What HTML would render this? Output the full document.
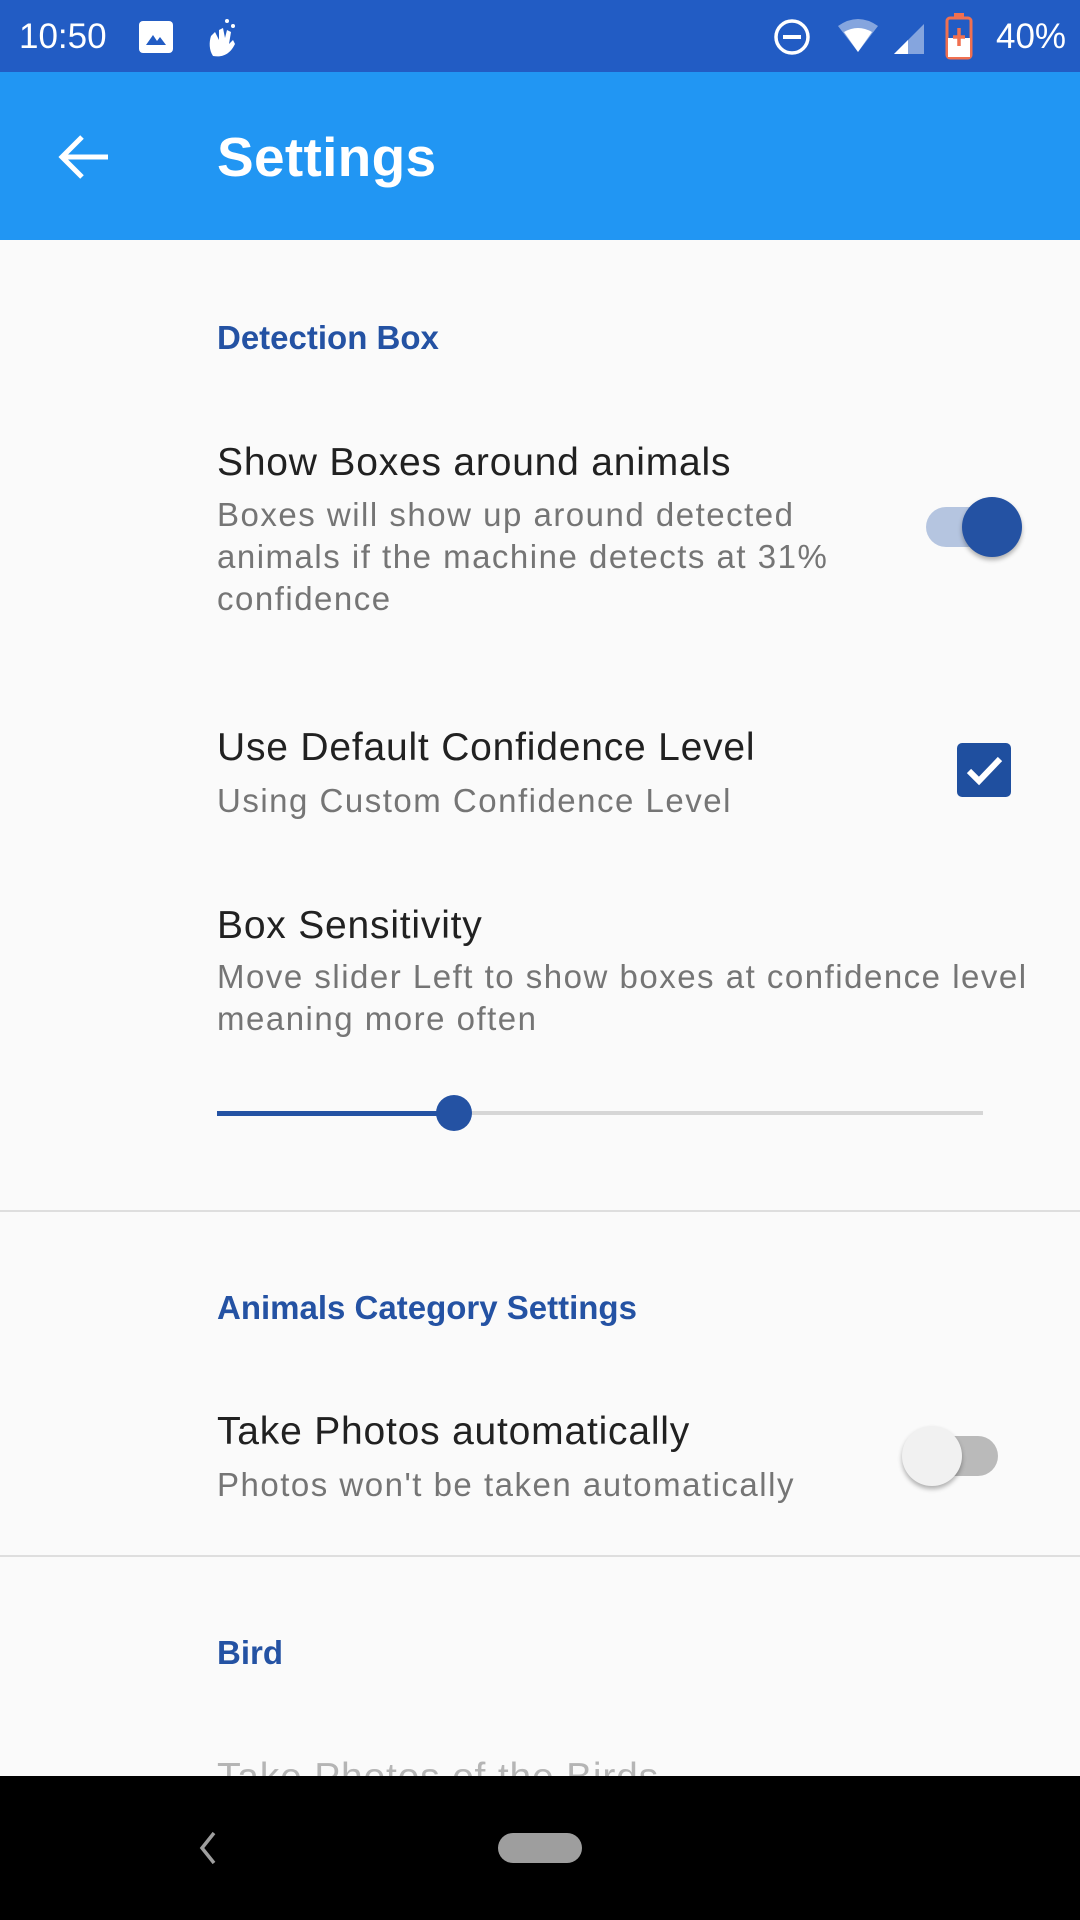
<!DOCTYPE html>
<html><head><meta charset="utf-8"><style>
*{margin:0;padding:0;box-sizing:border-box}
body{width:1080px;height:1920px;background:#fafafa;font-family:"Liberation Sans",sans-serif;position:relative;overflow:hidden}
.a{position:absolute;white-space:nowrap}
.cat{color:#2452a3;font-size:33px;font-weight:bold;left:217px}
.t{color:#212121;font-size:39px;left:217px;letter-spacing:.8px}
.s{color:#757575;font-size:33px;left:217px;line-height:42px;letter-spacing:1.5px}
</style></head><body>
<div class="a" style="left:0;top:0;width:1080px;height:72px;background:#225cc4"></div>
<div class="a" style="left:19px;top:17px;color:#fff;font-size:35px">10:50</div>
<div class="a" style="left:139px;top:21px;width:34px;height:32px;background:#fff;border-radius:4px"></div>
<svg class="a" style="left:142px;top:25px" width="28" height="24"><path d="M4 20 L11 10 L15 16 L18 12 L24 20Z" fill="#225cc4"/></svg>
<svg class="a" style="left:205px;top:16px" width="34" height="42"><path d="M8 40 C4 34 4 26 6 20 L10 16 L14 24 L14 14 L18 12 L20 22 L22 14 L26 16 L24 28 L28 24 L30 28 C26 36 20 42 8 40Z" fill="#fff"/><circle cx="22" cy="5" r="2" fill="#fff"/><circle cx="28" cy="10" r="2" fill="#fff"/></svg>
<svg class="a" style="left:772px;top:17px" width="40" height="40"><circle cx="20" cy="20" r="16" fill="none" stroke="#fff" stroke-width="3.5"/><rect x="11" y="18" width="18" height="4" fill="#fff"/></svg>
<svg class="a" style="left:836px;top:18px" width="92" height="40"><path d="M2 8 Q22 -6 42 8 L22 34Z" fill="#fff" opacity=".45"/><path d="M8 14 Q22 6 36 14 L22 34Z" fill="#fff"/><path d="M88 6 L88 36 L58 36Z" fill="#fff" opacity=".45"/><path d="M72 22 L72 36 L58 36Z" fill="#fff"/></svg>
<svg class="a" style="left:944px;top:12px" width="30" height="48"><rect x="10" y="1" width="10" height="5" fill="#f07050"/><rect x="3" y="6" width="24" height="40" rx="3" fill="#225cc4" stroke="#f07050" stroke-width="3"/><rect x="4" y="26" width="22" height="19" fill="#fff"/><path d="M15 16 V34 M9 25 H21" stroke="#f07050" stroke-width="3.5"/></svg>
<div class="a" style="left:996px;top:17px;color:#fff;font-size:35px">40%</div>
<div class="a" style="left:0;top:72px;width:1080px;height:168px;background:#2196f3"></div>
<svg class="a" style="left:58px;top:133px" width="52" height="48"><path d="M50 24 H6 M24 4 L4 24 L24 44" fill="none" stroke="#fff" stroke-width="5"/></svg>
<div class="a" style="left:217px;top:125px;color:#fff;font-size:55px;font-weight:bold;letter-spacing:.3px">Settings</div>

<div class="a cat" style="top:319px">Detection Box</div>
<div class="a t" style="top:441px">Show Boxes around animals</div>
<div class="a s" style="top:494px">Boxes will show up around detected<br>animals if the machine detects at 31%<br>confidence</div>
<div class="a" style="left:926px;top:507px;width:76px;height:40px;border-radius:20px;background:#b5c5e0"></div>
<div class="a" style="left:962px;top:497px;width:60px;height:60px;border-radius:50%;background:#2452a3;box-shadow:0 3px 5px rgba(0,0,0,.3)"></div>

<div class="a t" style="top:726px">Use Default Confidence Level</div>
<div class="a s" style="top:780px">Using Custom Confidence Level</div>
<div class="a" style="left:957px;top:743px;width:54px;height:54px;border-radius:5px;background:#1f4f9f"></div>
<svg class="a" style="left:957px;top:743px" width="54" height="54"><path d="M12 28 L22 38 L43 16" fill="none" stroke="#fff" stroke-width="6"/></svg>

<div class="a t" style="top:904px">Box Sensitivity</div>
<div class="a s" style="top:956px">Move slider Left to show boxes at confidence level<br>meaning more often</div>
<div class="a" style="left:217px;top:1111px;width:766px;height:4px;background:#d6d6d6"></div>
<div class="a" style="left:217px;top:1111px;width:237px;height:5px;background:#2452a3"></div>
<div class="a" style="left:436px;top:1095px;width:36px;height:36px;border-radius:50%;background:#2452a3"></div>
<div class="a" style="left:0;top:1210px;width:1080px;height:2px;background:#dedede"></div>

<div class="a cat" style="top:1289px">Animals Category Settings</div>
<div class="a t" style="top:1410px">Take Photos automatically</div>
<div class="a s" style="top:1464px">Photos won't be taken automatically</div>
<div class="a" style="left:906px;top:1436px;width:92px;height:40px;border-radius:20px;background:#bababa"></div>
<div class="a" style="left:902px;top:1426px;width:60px;height:60px;border-radius:50%;background:#f1f1f1;box-shadow:0 3px 5px rgba(0,0,0,.3)"></div>
<div class="a" style="left:0;top:1555px;width:1080px;height:2px;background:#dedede"></div>

<div class="a cat" style="top:1634px">Bird</div>
<div class="a t" style="top:1756px;color:#b5b5b5">Take Photos of the Birds</div>
<div class="a" style="left:0;top:1776px;width:1080px;height:144px;background:#000"></div>
<svg class="a" style="left:194px;top:1831px" width="24" height="34"><path d="M20 2 L8 17 L20 32" fill="none" stroke="#9e9e9e" stroke-width="3.5"/></svg>
<div class="a" style="left:498px;top:1833px;width:84px;height:30px;border-radius:15px;background:#9e9e9e"></div>
</body></html>
